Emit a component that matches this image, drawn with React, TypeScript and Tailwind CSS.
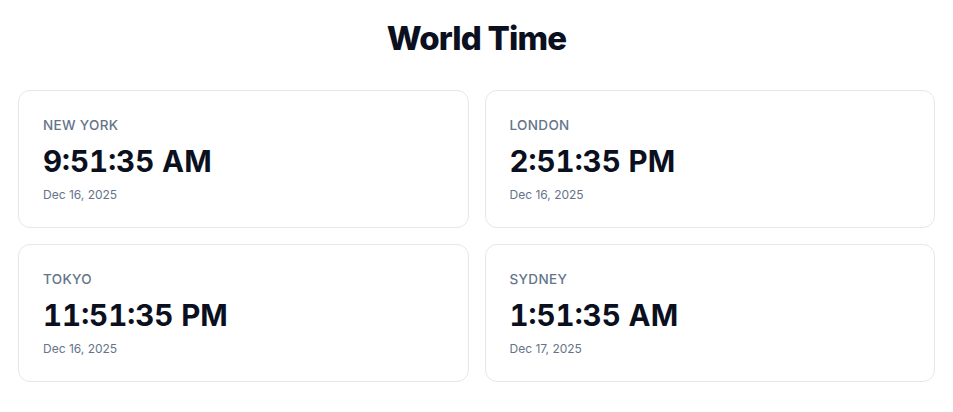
import React from "react";

const cities = [
  { name: "NEW YORK", time: "9:51:35 AM", date: "Dec 16, 2025" },
  { name: "LONDON", time: "2:51:35 PM", date: "Dec 16, 2025" },
  { name: "TOKYO", time: "11:51:35 PM", date: "Dec 16, 2025" },
  { name: "SYDNEY", time: "1:51:35 AM", date: "Dec 17, 2025" },
];

export default function App() {
  return (
    <div
      className="min-h-screen bg-white px-[18px] pt-[18px] pb-6"
      style={{ fontFamily: "Inter, 'Noto Sans', sans-serif" }}
    >
      <h1 className="text-center text-[33px] leading-[40px] font-extrabold tracking-tight text-[#0b1020] mb-[32px]">
        World Time
      </h1>
      <div className="grid grid-cols-2 gap-4">
        {cities.map((c) => (
          <div
            key={c.name}
            className="rounded-xl border border-[#e5e7eb] bg-white p-6"
          >
            <div className="text-[13.5px] leading-5 font-medium tracking-wide text-[#64748b]">
              {c.name}
            </div>
            <div className="mt-2 text-[29.5px] leading-9 font-bold tabular-nums text-[#0b1020]">
              {c.time}
            </div>
            <div className="mt-2 text-xs leading-4 text-[#64748b]">{c.date}</div>
          </div>
        ))}
      </div>
    </div>
  );
}
